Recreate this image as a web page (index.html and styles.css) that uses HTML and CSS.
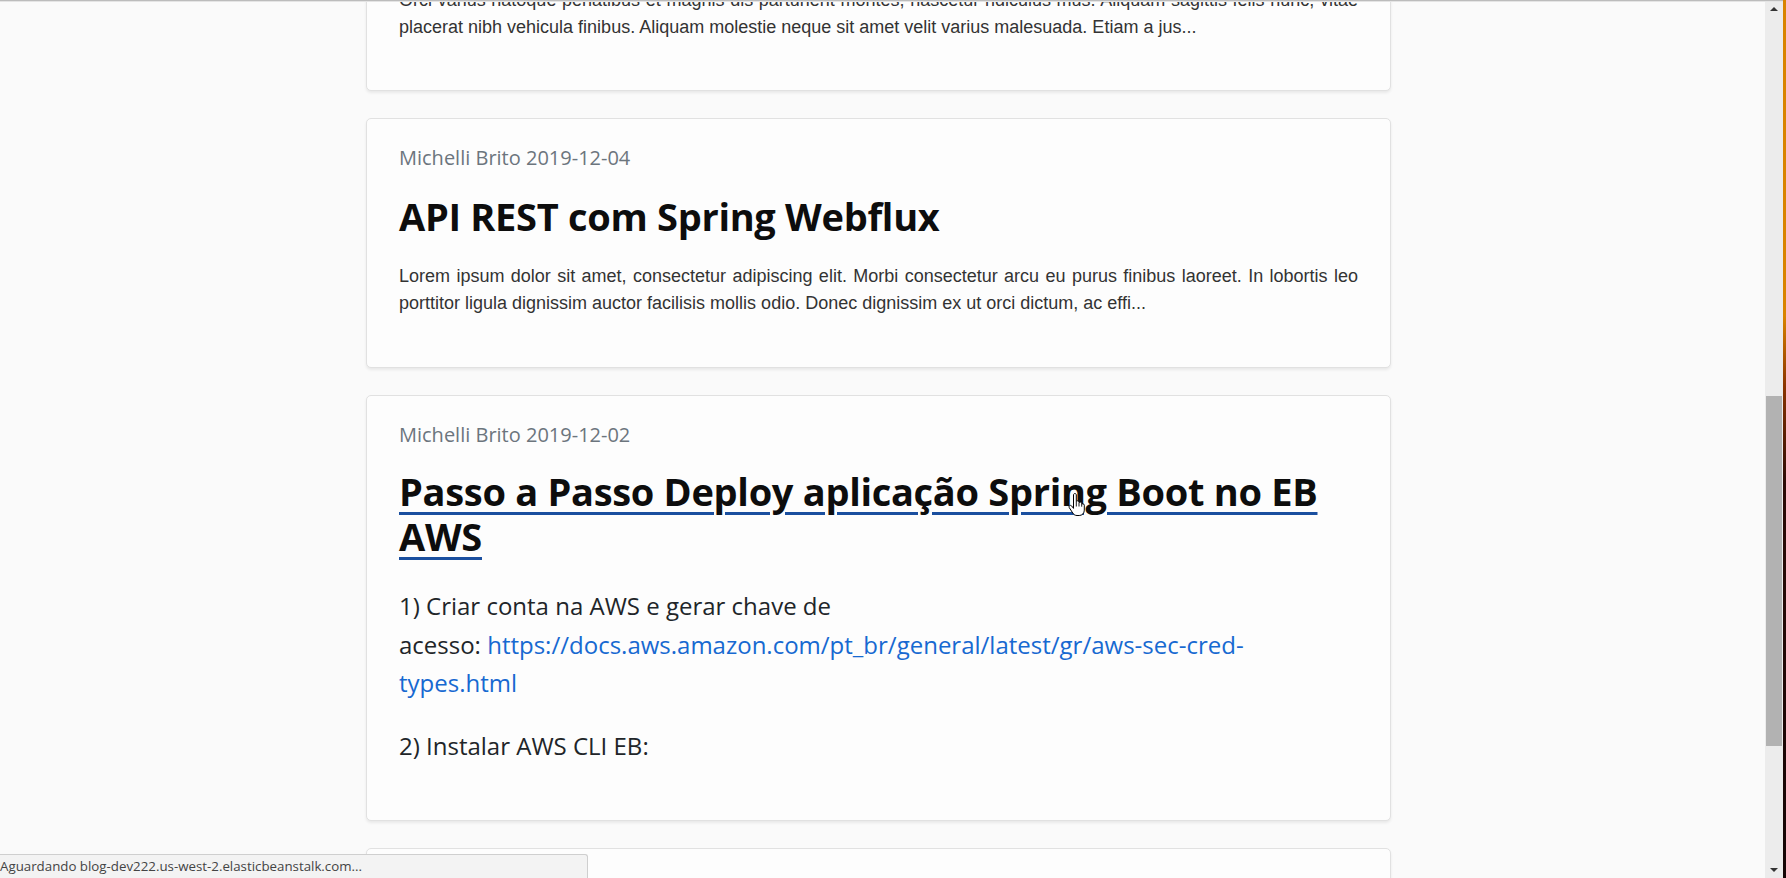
FILE: index.html
```html
<!DOCTYPE html>
<html lang="pt-BR">
<head>
<meta charset="utf-8">
<title>Blog</title>
<link rel="stylesheet" href="styles.css">
</head>
<body>
<div class="window">
  <main class="viewport">
    <div class="feed">
      <article class="card card-first">
        <p class="summary summary-first">Orci varius natoque penatibus et magnis dis parturient montes, nascetur ridiculus mus. Aliquam sagittis felis nunc, vitae placerat nibh vehicula finibus. Aliquam molestie neque sit amet velit varius malesuada. Etiam a jus...</p>
      </article>
      <article class="card">
        <div class="meta">Michelli Brito 2019-12-04</div>
        <h1 class="title">API REST com Spring Webflux</h1>
        <p class="summary">Lorem ipsum dolor sit amet, consectetur adipiscing elit. Morbi consectetur arcu eu purus finibus laoreet. In lobortis leo porttitor ligula dignissim auctor facilisis mollis odio. Donec dignissim ex ut orci dictum, ac effi...</p>
      </article>
      <article class="card card-post">
        <div class="meta">Michelli Brito 2019-12-02</div>
        <h1 class="title"><a class="title-link" href="#">Passo a Passo Deploy aplicação Spring Boot no EB AWS</a></h1>
        <div class="post-content">
          <p>1) Criar conta na AWS e gerar chave de acesso:&nbsp;<a class="content-link" href="#">https://docs.aws.amazon.com/pt_br/general/latest/gr/aws-sec-cred-types.html</a></p>
          <p>2) Instalar AWS CLI EB:</p>
        </div>
      </article>
      <article class="card">
        <div class="meta">Michelli Brito</div>
      </article>
    </div>
  </main>
  <div class="scrollbar">
    <div class="sb-btn"><span class="tri tri-up"></span></div>
    <div class="sb-track"><div class="sb-thumb"></div></div>
    <div class="sb-btn"><span class="tri tri-down"></span></div>
  </div>
  <div class="desk-strip"></div>
</div>
<div class="topline"></div>
<svg class="cursor" width="18" height="23" viewBox="0 0 18 23" aria-hidden="true">
  <path d="M5.5 2c0-.9.6-1.5 1.4-1.5S8.3 1.1 8.3 2v6.6c.2-.5.7-.8 1.3-.8.8 0 1.4.6 1.4 1.4v.6c.3-.4.8-.7 1.3-.7.8 0 1.4.6 1.4 1.4v.8c.3-.3.7-.5 1.2-.5.8 0 1.4.6 1.4 1.4v4.9c0 3.2-2.1 5.4-5.1 5.4H9c-1.9 0-3.2-.9-4.2-2.4L1.3 14.7c-.5-.8-.3-1.7.4-2.1.7-.4 1.5-.2 2 .4l1.8 2.4z" fill="#fff" stroke="#000" stroke-width="1" stroke-linejoin="round"/>
  <path d="M8.3 9v4.5M11 10v3.5M13.7 11.3v2.4" stroke="#000" stroke-width="0.9" fill="none"/>
</svg>
<div class="statusbar">Aguardando blog-dev222.us-west-2.elasticbeanstalk.com...</div>
</body>
</html>
```
FILE: styles.css
```css
html, body {
  margin: 0;
  padding: 0;
}

body {
  height: 878px;
  overflow: hidden;
  background: #fafafa;
  font-family: "Open Sans", "Noto Sans", sans-serif;
  color: #212529;
}

.window {
  display: flex;
  height: 878px;
}

.viewport {
  flex: 1;
  min-width: 0;
  overflow: hidden;
}

.feed {
  width: 1025px;
  margin: -37px 0 0 366px;
  display: flex;
  flex-direction: column;
  gap: 27px;
}

.card {
  box-sizing: border-box;
  background: #fdfdfd;
  border: 1px solid #e1e1e1;
  border-radius: 5px;
  box-shadow: 0 2px 3px rgba(0, 0, 0, 0.07);
  padding: 26px 32px 34px;
}

.card-first {
  padding-top: 23px;
  padding-bottom: 33px;
}

.meta {
  font-size: 20px;
  line-height: 26px;
  color: #6c757d;
}

.title {
  margin: 23px 0 0;
  font-size: 38px;
  line-height: 45px;
  font-weight: 700;
  color: #0d0d0d;
  letter-spacing: -0.3px;
}

.card-post .title {
  margin-top: 21px;
}

.title-link {
  color: #0d0d0d;
  text-decoration: underline;
  text-decoration-color: #1a4f9f;
  text-decoration-thickness: 3px;
  text-underline-offset: 6px;
}

.summary {
  margin: 24px 0 16px;
  font-family: "Liberation Sans", Arial, sans-serif;
  font-size: 18px;
  line-height: 27px;
  color: #333;
  text-align: justify;
}

.summary-first {
  margin-top: 0;
}

.post-content {
  margin-top: 28px;
  font-size: 24px;
  line-height: 38.5px;
  color: #212529;
}

.post-content p {
  margin: 0 0 24px;
}

.post-content p:last-child {
  margin-bottom: 21px;
}

.content-link {
  color: #1769d1;
  text-decoration: none;
}

/* fake window scrollbar */
.scrollbar {
  width: 18px;
  background: #ececec;
  display: flex;
  flex-direction: column;
}

.sb-btn {
  height: 17px;
  display: flex;
  align-items: center;
  justify-content: center;
}

.tri {
  width: 0;
  height: 0;
  border-left: 4px solid transparent;
  border-right: 4px solid transparent;
}

.tri-up {
  border-bottom: 4px solid #333;
}

.tri-down {
  border-top: 4px solid #333;
}

.sb-track {
  flex: 1;
  padding: 379px 1px 0;
}

.sb-thumb {
  height: 350px;
  background: #b2b2b2;
}

.desk-strip {
  width: 3px;
  background: linear-gradient(#d98300 0, #d98300 36%, #8a3300 44%, #2b0a05 55%, #150505 100%);
}

.topline {
  position: fixed;
  top: 0;
  left: 0;
  width: 1783px;
  height: 1px;
  background: #bcbcbc;
  border-bottom: 1px solid #e4e4e4;
}

.cursor {
  position: fixed;
  left: 1068px;
  top: 493px;
}

.statusbar {
  position: fixed;
  left: 0;
  bottom: 0;
  box-sizing: border-box;
  width: 588px;
  height: 24px;
  background: #f3f3f3;
  border-top: 1px solid #cfcfcf;
  border-right: 1px solid #cfcfcf;
  border-top-right-radius: 3px;
  font-size: 13.3px;
  line-height: 23px;
  color: #444;
  white-space: nowrap;
}
```
